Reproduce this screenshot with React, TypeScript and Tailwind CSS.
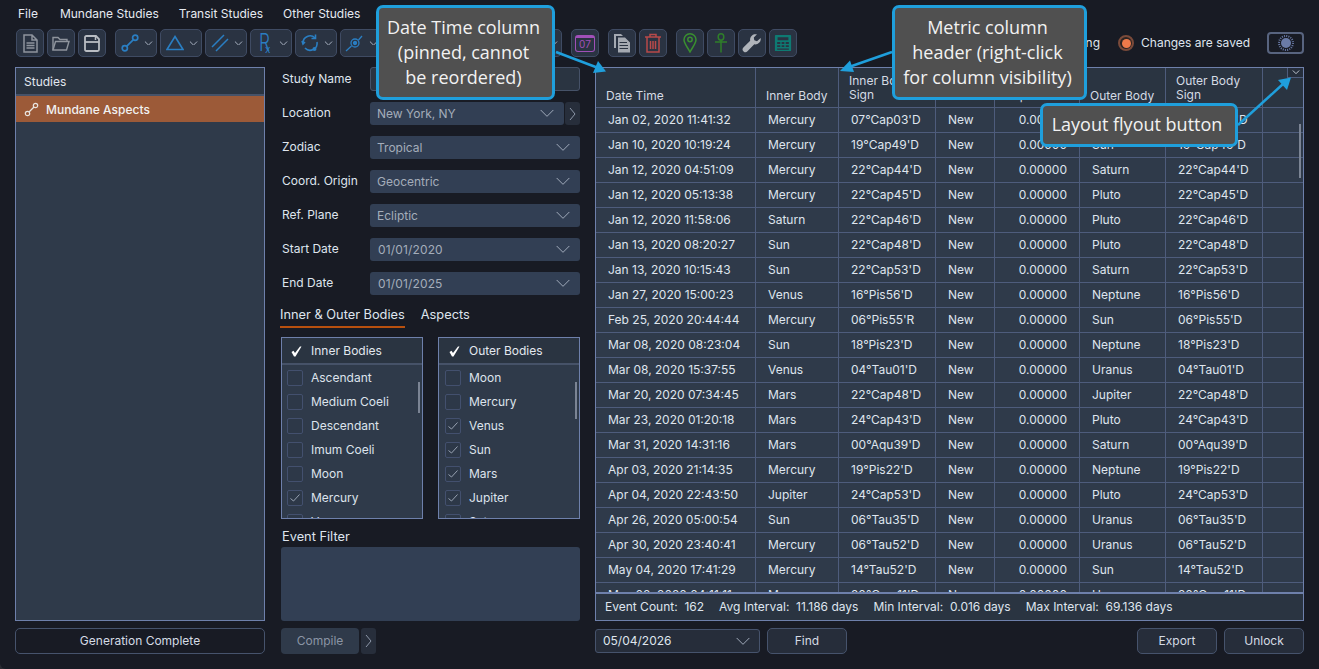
import React from "react";

const rows = [
  ["Jan 02, 2020 11:41:32", "Mercury", "07°Cap03'D", "New", "0.00000", "Sun", "07°Cap03'D"],
  ["Jan 10, 2020 10:19:24", "Mercury", "19°Cap49'D", "New", "0.00000", "Sun", "19°Cap49'D"],
  ["Jan 12, 2020 04:51:09", "Mercury", "22°Cap44'D", "New", "0.00000", "Saturn", "22°Cap44'D"],
  ["Jan 12, 2020 05:13:38", "Mercury", "22°Cap45'D", "New", "0.00000", "Pluto", "22°Cap45'D"],
  ["Jan 12, 2020 11:58:06", "Saturn", "22°Cap46'D", "New", "0.00000", "Pluto", "22°Cap46'D"],
  ["Jan 13, 2020 08:20:27", "Sun", "22°Cap48'D", "New", "0.00000", "Pluto", "22°Cap48'D"],
  ["Jan 13, 2020 10:15:43", "Sun", "22°Cap53'D", "New", "0.00000", "Saturn", "22°Cap53'D"],
  ["Jan 27, 2020 15:00:23", "Venus", "16°Pis56'D", "New", "0.00000", "Neptune", "16°Pis56'D"],
  ["Feb 25, 2020 20:44:44", "Mercury", "06°Pis55'R", "New", "0.00000", "Sun", "06°Pis55'D"],
  ["Mar 08, 2020 08:23:04", "Sun", "18°Pis23'D", "New", "0.00000", "Neptune", "18°Pis23'D"],
  ["Mar 08, 2020 15:37:55", "Venus", "04°Tau01'D", "New", "0.00000", "Uranus", "04°Tau01'D"],
  ["Mar 20, 2020 07:34:45", "Mars", "22°Cap48'D", "New", "0.00000", "Jupiter", "22°Cap48'D"],
  ["Mar 23, 2020 01:20:18", "Mars", "24°Cap43'D", "New", "0.00000", "Pluto", "24°Cap43'D"],
  ["Mar 31, 2020 14:31:16", "Mars", "00°Aqu39'D", "New", "0.00000", "Saturn", "00°Aqu39'D"],
  ["Apr 03, 2020 21:14:35", "Mercury", "19°Pis22'D", "New", "0.00000", "Neptune", "19°Pis22'D"],
  ["Apr 04, 2020 22:43:50", "Jupiter", "24°Cap53'D", "New", "0.00000", "Pluto", "24°Cap53'D"],
  ["Apr 26, 2020 05:00:54", "Sun", "06°Tau35'D", "New", "0.00000", "Uranus", "06°Tau35'D"],
  ["Apr 30, 2020 23:40:41", "Mercury", "06°Tau52'D", "New", "0.00000", "Uranus", "06°Tau52'D"],
  ["May 04, 2020 17:41:29", "Mercury", "14°Tau52'D", "New", "0.00000", "Sun", "14°Tau52'D"],
  ["May 08, 2020 04:11:11", "Mercury", "20°Gem11'D", "New", "0.00000", "Uranus", "20°Gem11'D"],
];

const TB = ({ children, className = "" }: { children?: React.ReactNode; className?: string }) => (
  <div className={`flex h-[28px] items-center justify-center rounded-[5px] border border-[#3f4b63] bg-[#2a3342] ${className}`}>{children}</div>
);

const BLUE = "#2a7ec2";

const Thin = ({ className = "", size = 16, color = "#a3adbd" }: { className?: string; size?: number; color?: string }) => (
  <svg width={size} height={size * 0.55} viewBox="0 0 16 9" className={className} fill="none" stroke={color} strokeWidth={size < 12 ? 1.8 : 1}>
    <path d="M1.5 1 L8 7.5 L14.5 1" />
  </svg>
);

const DD = ({ children }: { children?: React.ReactNode }) => (
  <TB className="w-[42px] gap-[4px] pl-[1px]">
    <div className="flex w-[20px] items-center justify-center">{children}</div>
    <Thin size={9} color="#aab3c2" />
  </TB>
);

const Sel = ({ text, w = "w-full", date = false }: { text: string; w?: string; date?: boolean }) => (
  <div className={`flex h-[23px] items-center justify-between rounded-[3px] bg-[#323f54] pr-[9px] ${date ? "pl-[8px] tracking-[0.15px]" : "pl-[7px]"} ${w} text-[#a4adba]`}>
    <span>{text}</span>
    <Thin />
  </div>
);

const Label = ({ children, pb = "pb-[2px]" }: { children: React.ReactNode; pb?: string }) => (
  <div className={`w-[89px] shrink-0 pl-[1px] text-[#dfe5ee] ${pb}`}>{children}</div>
);

const Chev = ({ h = "h-[23px]" }: { h?: string }) => (
  <div className={`flex w-[15px] items-center justify-center rounded-[3px] bg-[#272e3b] ${h}`}>
    <svg width="7" height="14" viewBox="0 0 7 14" fill="none" stroke="#8d97a8" strokeWidth="1"><path d="M1 1 L6 7 L1 13" /></svg>
  </div>
);

const Box = ({ on }: { on: boolean }) => (
  <div className="flex h-[16px] w-[16px] shrink-0 items-center justify-center rounded-[2px] border border-[#43506e] bg-[#2d3848]">
    {on && (
      <svg width="10" height="8" viewBox="0 0 10 8" fill="none" stroke="#98a2b2" strokeWidth="1"><path d="M0.5 4.5 L3.5 7 L9.5 0.5" /></svg>
    )}
  </div>
);

const BodyList = ({ title, items, barH, hp, lp }: { title: string; items: [string, boolean][]; barH: string; hp: string; lp: string }) => (
  <div className="relative flex h-[182px] w-[142px] flex-col overflow-hidden border border-[#6e80ab] bg-[#2f3a4a]">
    <div className={`flex h-[27px] shrink-0 items-center gap-[9px] border-b-2 border-[#465268] bg-[#2a3441] pt-[1px] text-[#e3e8ef] ${hp}`}>
      <svg width="11" height="11" viewBox="0 0 11 11" fill="#fff"><path d="M0.5 6 L2.5 4.8 L4 7 L9 0.5 L10.5 0.5 L4.5 10.5 L3 10.5 Z" /></svg>
      <span>{title}</span>
    </div>
    <div className={`flex flex-col pt-[1px] ${lp}`}>
      {items.map(([n, on]) => (
        <div key={n} className="flex h-[24px] shrink-0 items-center gap-[8px] text-[#dde3ec]">
          <Box on={on} />
          <span>{n}</span>
        </div>
      ))}
    </div>
    <div className={`absolute right-[2px] top-[44px] w-[2px] bg-[#7b8494] ${barH}`} />
  </div>
);

const colW = ["w-[160px]", "w-[83px]", "w-[97px]", "w-[59px]", "w-[85px]", "w-[86px]", "w-[97px]", "flex-1"];

const Btn = ({ children, className = "" }: { children: React.ReactNode; className?: string }) => (
  <div className={`flex h-[26px] items-center justify-center rounded-[5px] border border-[#46536c] text-[#d5dbe4] ${className}`}>{children}</div>
);

const Callout = ({ className, children }: { className: string; children: React.ReactNode }) => (
  <div className={`absolute flex items-center justify-center rounded-[7px] border-[3px] border-[#1f9fdc] bg-[#505050] pb-[1px] pr-[4px] text-center font-['Open_Sans',sans-serif] text-[18px] leading-[25px] text-[#f2f2f2] ${className}`}>
    {children}
  </div>
);

export default function App() {
  return (
    <div className="h-[669px] w-[1319px] bg-[#2a2c33]">
      <div className="relative flex h-[669px] w-[1319px] flex-col overflow-hidden rounded-bl-[6px] bg-[#181b24] font-['Inter',sans-serif] text-[12px] text-[#dfe5ee]">
        {/* menu */}
        <div className="flex h-[29px] shrink-0 items-center pb-[2px] pl-[18px] text-[#e6eaf1]">
          <span>File</span>
          <span className="ml-[22px]">Mundane Studies</span>
          <span className="ml-[20px]">Transit Studies</span>
          <span className="ml-[20px]">Other Studies</span>
        </div>

        {/* toolbar */}
        <div className="flex h-[28px] shrink-0 items-center pl-[16px] pr-[15px]">
          <div className="flex gap-[3px]">
            <TB className="w-[28px]">
              <svg width="15" height="19" viewBox="0 0 15 19" fill="none" stroke="#8e949d" strokeWidth="1.5"><path d="M1 1 H9 L14 6 V18 H1 Z M9 1 V6 H14" /><path d="M3.5 9h8M3.5 11.5h8M3.5 14h8" strokeWidth="1.3" /></svg>
            </TB>
            <TB className="w-[28px]">
              <svg width="18" height="15" viewBox="0 0 18 15" fill="none" stroke="#8e949d" strokeWidth="1.4"><path d="M1 14 V1.5 H6 L8 3.5 H15 V5.5" /><path d="M1 14 L3.5 5.5 H17 L14.5 14 Z" /></svg>
            </TB>
            <TB className="w-[28px]">
              <svg width="16" height="17" viewBox="0 0 16 17" fill="none" stroke="#b9bdc3" strokeWidth="1.8"><path d="M1 2.5 Q1 1 2.5 1 H12 L15 4 V14.5 Q15 16 13.5 16 H2.5 Q1 16 1 14.5 Z" /><path d="M1 7 H15" /><path d="M11.5 1.5 V5" strokeWidth="1.5" /></svg>
            </TB>
          </div>
          <div className="ml-[9px] flex gap-[3px]">
            <DD>
              <svg width="18" height="18" viewBox="0 0 18 18" fill="none" stroke={BLUE} strokeWidth="1.7"><circle cx="3.8" cy="14.2" r="2.6" /><circle cx="14.2" cy="3.8" r="2.6" /><path d="M5.8 12.2 L12.2 5.8" /></svg>
            </DD>
            <DD>
              <svg width="18" height="16" viewBox="0 0 18 16" fill="none" stroke={BLUE} strokeWidth="1.6"><path d="M9 1.5 L17 14.5 H1 Z" /></svg>
            </DD>
            <DD>
              <svg width="18" height="18" viewBox="0 0 18 18" fill="none" stroke={BLUE} strokeWidth="1.5"><path d="M1 13 L13 1 M5 17 L17 5" /></svg>
            </DD>
            <DD>
              <span className="relative block h-[20px] w-[12px] text-[24px] font-light leading-[20px] text-[#2a7ec2]">
                <span className="block origin-top-left scale-x-[0.72]">R</span>
                <span className="absolute bottom-[-1px] left-[6px] text-[10px] font-normal leading-none">x</span>
              </span>
            </DD>
            <DD>
              <svg width="20" height="20" viewBox="0 0 20 20" fill="none" stroke={BLUE} strokeWidth="1.6"><path d="M3 10 A7 7 0 0 1 15 5" /><path d="M17 9 A7 7 0 0 1 5 15" /><path d="M15.5 1.5 V5.5 H11.5" /><path d="M2 8 L3 11 L5 9" /><circle cx="14.5" cy="16" r="2" fill={BLUE} stroke="none" /></svg>
            </DD>
            <DD>
              <svg width="20" height="20" viewBox="0 0 20 20" fill="none" stroke={BLUE} strokeWidth="1.3"><circle cx="10" cy="10" r="4" /><circle cx="10" cy="10" r="1.5" fill={BLUE} /><path d="M1 18 L6.5 13 M13.5 7 L17 3" /></svg>
            </DD>
            <DD />
            <DD />
            <DD />
            <DD />
          </div>
          <TB className="ml-[9px] w-[28px]">
            <div className="flex h-[17px] w-[20px] items-center justify-center rounded-[3px] border-[1.5px] border-t-[3px] border-[#a050b8] text-[10px] leading-none text-[#a050b8]">07</div>
          </TB>
          <div className="ml-[9px] flex gap-[3px]">
            <TB className="w-[28px]">
              <svg width="18" height="20" viewBox="0 0 18 20" fill="#a4a9b1"><path fillRule="evenodd" d="M1 1 H8 L10 3 H3 V15 H1 Z" /><path fillRule="evenodd" d="M5 4.5 H12 L17 9.5 V19.5 H5 Z M6.5 9 H14 V10 H6.5 Z M6.5 12 H15 V13 H6.5 Z M6.5 15 H15 V16 H6.5 Z" /></svg>
            </TB>
            <TB className="w-[28px]">
              <svg width="18" height="20" viewBox="0 0 18 20" fill="none" stroke="#b84a4a" strokeWidth="1.5"><path d="M1 4 H17 M6 4 V1.5 H12 V4 M3 4 V19 H15 V4 M6.5 8 V16 M9 8 V16 M11.5 8 V16" /></svg>
            </TB>
          </div>
          <div className="ml-[9px] flex gap-[3px]">
            <TB className="w-[28px]">
              <svg width="14" height="20" viewBox="0 0 14 20" fill="none" stroke="#3a8f30" strokeWidth="1.5"><path d="M7 19 C4.5 14 1 10.5 1 6.8 A6 6 0 0 1 13 6.8 C13 10.5 9.5 14 7 19 Z" /><circle cx="7" cy="6.5" r="2.2" /></svg>
            </TB>
            <TB className="w-[28px]">
              <svg width="14" height="20" viewBox="0 0 14 20" fill="none" stroke="#2f7f2a" strokeWidth="1.5"><ellipse cx="7" cy="4" rx="2.8" ry="3.2" /><path d="M1 9 H13 M7 7.2 V19.5" /></svg>
            </TB>
            <TB className="w-[28px]">
              <svg width="20" height="20" viewBox="0 0 22 22" fill="#b0b4ba"><path d="M20.5 5.5 L16.5 9 L13.5 8 L13 5 L16.5 1.5 A6 6 0 0 0 9 8.5 L1.5 16 A3 3 0 0 0 6 20 L13.5 12.5 A6 6 0 0 0 20.5 5.5 Z" /></svg>
            </TB>
            <TB className="w-[28px]">
              <svg width="18" height="18" viewBox="0 0 20 20" fill="#0e7a72"><path fillRule="evenodd" d="M2 1 H18 Q19 1 19 2 V18 Q19 19 18 19 H2 Q1 19 1 18 V2 Q1 1 2 1 Z M4 3.5 V7 H16 V3.5 Z M3.5 9 V11 H7 V9 Z M8.5 9 V11 H11.5 V9 Z M13 9 V11 H16.5 V9 Z M3.5 12.5 V14.5 H7 V12.5 Z M8.5 12.5 V14.5 H11.5 V12.5 Z M13 12.5 V14.5 H16.5 V12.5 Z M3.5 16 V17.5 H16.5 V16 Z" /></svg>
            </TB>
          </div>
          <span className="ml-auto mr-[18px] text-[#dfe5ee]">Auto-saving</span>
          <div className="mr-[7px] flex h-[16px] w-[16px] items-center justify-center rounded-full border-[2px] border-[#7a4a3a] bg-[#2c2422]">
            <div className="h-[9px] w-[9px] rounded-full bg-[#f07a4a]" />
          </div>
          <span className="mr-[17px] text-[#dfe5ee]">Changes are saved</span>
          <div className="flex h-[22px] w-[37px] items-center justify-center rounded-[4px] border-2 border-[#58647f] bg-[#181b24]">
            <svg width="16" height="16" viewBox="0 0 16 16"><circle cx="8" cy="8" r="5" fill="#6a7ba8" /><circle cx="8" cy="8" r="7" fill="none" stroke="#6a7ba8" strokeWidth="2" strokeDasharray="1 1.2" /></svg>
          </div>
        </div>

        {/* main */}
        <div className="mt-[10px] flex min-h-0 flex-1 gap-[15px] pl-[15px] pr-[15px]">
          {/* left */}
          <div className="flex w-[250px] shrink-0 flex-col">
            <div className="flex h-[554px] flex-col border border-[#6e80ab] bg-[#2f3a4a]">
              <div className="flex h-[28px] shrink-0 items-center border-b-2 border-[#465268] bg-[#2a3441] pl-[8px] pt-[1px] text-[#e3e8ef]">Studies</div>
              <div className="flex h-[26px] items-center gap-[7px] bg-[#9c5a38] pl-[8px] pt-[1px] font-medium text-[#f1f1f1]">
                <svg width="15" height="15" viewBox="0 0 15 15" fill="none" stroke="#e8e4e0" strokeWidth="1.2"><circle cx="3.5" cy="11.5" r="2.2" /><circle cx="11.5" cy="3.5" r="2.2" /><path d="M5 10 L10 5" /></svg>
                <span>Mundane Aspects</span>
              </div>
            </div>
            <Btn className="mt-[7px] bg-[#181b24]">Generation Complete</Btn>
          </div>

          {/* middle */}
          <div className="ml-[1px] flex w-[299px] shrink-0 flex-col">
            <div className="flex flex-col gap-[11px]">
              <div className="flex items-center">
                <Label pb="pb-0">Study Name</Label>
                <div className="h-[24px] flex-1 rounded-[3px] border border-[#465268] bg-[#2a3441]" />
              </div>
              <div className="flex items-center">
                <Label>Location</Label>
                <div className="flex flex-1 gap-[1px]">
                  <Sel text="New York, NY" w="flex-1" />
                  <Chev />
                </div>
              </div>
              <div className="flex items-center"><Label>Zodiac</Label><div className="flex-1"><Sel text="Tropical" /></div></div>
              <div className="flex items-center"><Label>Coord. Origin</Label><div className="flex-1"><Sel text="Geocentric" /></div></div>
              <div className="flex items-center"><Label>Ref. Plane</Label><div className="flex-1"><Sel text="Ecliptic" /></div></div>
              <div className="flex items-center"><Label>Start Date</Label><div className="flex-1"><Sel text="01/01/2020" date /></div></div>
              <div className="flex items-center"><Label>End Date</Label><div className="flex-1"><Sel text="01/01/2025" date /></div></div>
            </div>

            <div className="mt-[12px] flex gap-[16px] text-[12.8px] leading-[16px] text-[#dfe5ee]">
              <div className="-ml-[1px] border-b-2 border-[#b8500e] pb-[3px]">Inner &amp; Outer Bodies</div>
              <div>Aspects</div>
            </div>

            <div className="mt-[9px] flex gap-[15px]">
              <BodyList
                title="Inner Bodies"
                barH="h-[31px]"
                hp="pl-[9px]"
                lp="pl-[5px]"
                items={[["Ascendant", false], ["Medium Coeli", false], ["Descendant", false], ["Imum Coeli", false], ["Moon", false], ["Mercury", true], ["Venus", true]]}
              />
              <BodyList
                title="Outer Bodies"
                barH="h-[37px]"
                hp="pl-[10px]"
                lp="pl-[6px]"
                items={[["Moon", false], ["Mercury", false], ["Venus", true], ["Sun", true], ["Mars", true], ["Jupiter", true], ["Saturn", true]]}
              />
            </div>

            <div className="mt-[9px] h-[19px] pl-[1px] text-[12.8px] leading-[18px] text-[#dfe5ee]">Event Filter</div>
            <div className="h-[74px] rounded-[3px] bg-[#323f54]" />

            <div className="mt-[7px] flex gap-[2px]">
              <div className="flex h-[26px] w-[78px] items-center justify-center rounded-[4px] bg-[#2f3a4a] text-[#8b95a5]">Compile</div>
              <Chev h="h-[26px]" />
            </div>
          </div>

          {/* table */}
          <div className="flex w-[709px] shrink-0 flex-col">
            <div className="relative flex h-[554px] flex-col overflow-hidden border border-[#6e80ab] bg-[#2f3a4a]">
              <div className="flex h-[40px] shrink-0 border-b border-[#4e5c7c] bg-[#2a3441] text-[#d5dbe4]">
                {[["Date Time"], ["Inner Body"], ["Inner Body", "Sign"], ["Phase"], ["Separation"], ["Outer Body"], ["Outer Body", "Sign"], [""]].map((h, i) => (
                  <div key={i} className={`${colW[i]} flex shrink-0 flex-col justify-end border-r border-[#4e5c7c] pl-[10px] leading-[14px] last:border-r-0 ${h.length > 1 ? "pb-[5px]" : "pb-[4px]"}`}>
                    {h.map((t, j) => <div key={j}>{t}</div>)}
                  </div>
                ))}
              </div>
              <div className="min-h-0 flex-1 overflow-hidden text-[#dfe5ee]">
                {rows.map((r) => (
                  <div key={r[0]} className="flex h-[25px] border-b border-[#4e5c7c]">
                    {r.map((c, i) => (
                      <div
                        key={i}
                        className={`${colW[i]} flex shrink-0 items-center border-r border-[#4e5c7c] ${i === 4 ? "justify-end pr-[12px]" : "pl-[12px]"}`}
                      >
                        {c}
                      </div>
                    ))}
                    <div className="flex-1" />
                  </div>
                ))}
              </div>
              <div className="flex h-[28px] shrink-0 items-center gap-[15px] border-t-2 border-[#6e80ab] bg-[#2a3441] pl-[9px] text-[#dfe5ee]">
                <span>Event Count:&nbsp; 162</span>
                <span>Avg Interval:&nbsp; 11.186 days</span>
                <span>Min Interval:&nbsp; 0.016 days</span>
                <span>Max Interval:&nbsp; 69.136 days</span>
              </div>
              <div className="absolute right-[2px] top-[56px] h-[54px] w-[2px] bg-[#7b8494]" />
              <div className="absolute right-0 top-0 flex h-[10px] w-[16px] items-center justify-center border-b border-l border-[#4e5c7c] bg-[#262e3b]">
                <Thin size={8} color="#d5dbe4" />
              </div>
            </div>
            <div className="mt-[7px] flex items-center">
              <div className="flex h-[24px] w-[165px] items-center justify-between rounded-[3px] border border-[#46536c] bg-[#262d3a] pl-[7px] pr-[8px] text-[#dfe5ee]">
                <span>05/04/2026</span>
                <Thin />
              </div>
              <Btn className="ml-[7px] w-[80px] bg-[#262d3a]">Find</Btn>
              <Btn className="ml-auto w-[80px] bg-[#262d3a]">Export</Btn>
              <Btn className="ml-[7px] w-[80px] bg-[#262d3a]">Unlock</Btn>
            </div>
          </div>
        </div>

        {/* annotations */}
        <svg className="pointer-events-none absolute left-0 top-0" width="1319" height="669" fill="#1f9fdc" stroke="none">
          <path d="M556 52 L597 67.5" stroke="#1f9fdc" strokeWidth="2.5" />
          <path d="M606 71.5 L593 73 L598 61 Z" />
          <path d="M892 52 L849 67" stroke="#1f9fdc" strokeWidth="2.5" />
          <path d="M840 71 L850 60.5 L854 72 Z" />
          <path d="M1238 125 L1283 84" stroke="#1f9fdc" strokeWidth="2.5" />
          <path d="M1291 77.5 L1287 90 L1278 80 Z" />
        </svg>
        <Callout className="left-[376px] top-[5px] h-[95px] w-[179px]">Date Time column<br />(pinned, cannot<br />be reordered)</Callout>
        <Callout className="left-[892px] top-[5px] h-[95px] w-[195px]">Metric column<br />header (right-click<br />for column visibility)</Callout>
        <Callout className="left-[1040px] top-[103px] h-[44px] w-[198px]">Layout flyout button</Callout>
      </div>
    </div>
  );
}
